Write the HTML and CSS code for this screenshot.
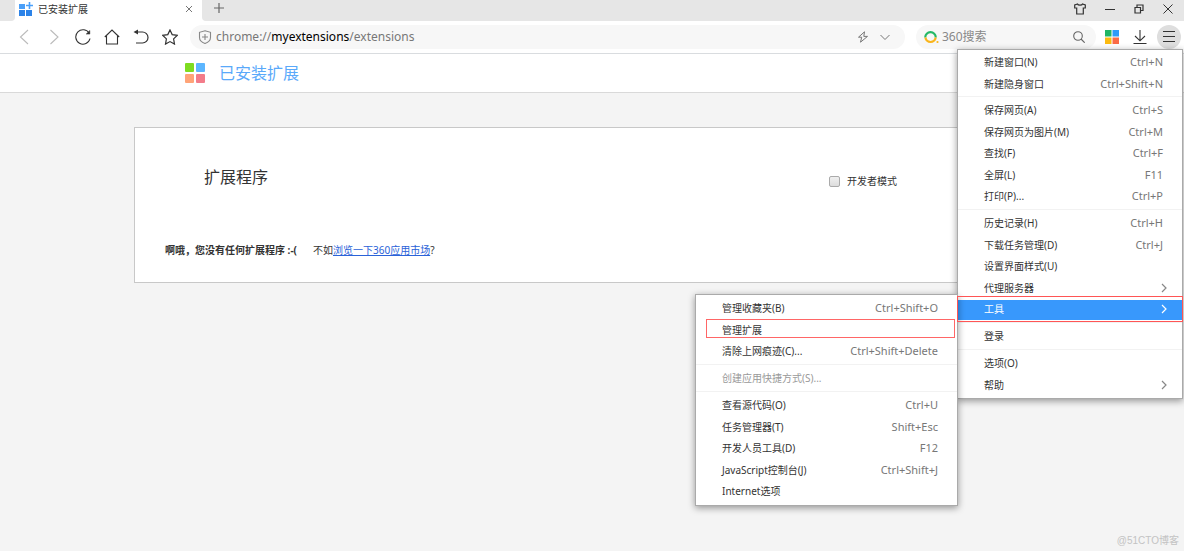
FILE: index.html
```html
<!DOCTYPE html>
<html lang="zh-CN">
<head>
<meta charset="utf-8">
<title>已安装扩展</title>
<link rel="stylesheet" href="styles.css">
</head>
<body>
<div class="browser">
  <div class="tabstrip">
    <div class="strip-lead"></div>
    <div class="tab">
      <svg class="tab-icon" width="14" height="14" viewBox="0 0 14 14"><path fill="#4a9ff8" d="M0 2h6v5H0z"/><path fill="#2c83e8" d="M7 8h6v6H7zM0 8h6v6H0z"/><path stroke="#4aa0fa" stroke-width="1.600" d="M10.500 0v7M7 3.500h7"/></svg>
      <span class="tab-title">已安装扩展</span>
      <button class="icon-button tab-close" aria-label="关闭标签页"><svg width="8" height="8" viewBox="0 0 8 8" fill="none" stroke="#777"><path d="M1 1l6 6M7 1L1 7"/></svg></button>
    </div>
    <div class="strip-rest">
      <button class="icon-button new-tab" aria-label="新标签页"><svg width="10" height="10" viewBox="0 0 10 10" fill="none" stroke="#666" stroke-width="1.200"><path d="M5 0v10M0 5h10"/></svg></button>
      <div class="window-controls">
        <button class="icon-button" aria-label="皮肤"><svg width="12" height="12" viewBox="0 0 12 12" fill="none" stroke="#333" stroke-width="1.200"><path d="M3.500 1L.7 2v3h2v6h6.600V5h2V2L8.500 1C8 2.600 4 2.600 3.500 1z"/></svg></button>
        <button class="icon-button" aria-label="最小化"><svg width="10" height="10" viewBox="0 0 10 10" stroke="#333"><path d="M0 5.500h10"/></svg></button>
        <button class="icon-button" aria-label="还原"><svg width="10" height="10" viewBox="0 0 10 10" fill="none" stroke="#333" stroke-width="1.200"><path d="M1 3.500h5.500V9H1zM3 3.500V1h6v5.500H6.500"/></svg></button>
        <button class="icon-button" aria-label="关闭"><svg width="10" height="10" viewBox="0 0 10 10" fill="none" stroke="#333"><path d="M.5.5l9 9M9.500.5l-9 9"/></svg></button>
      </div>
    </div>
  </div>

  <div class="toolbar">
    <div class="nav">
      <button class="icon-button" aria-label="后退"><svg width="16" height="16" viewBox="0 0 16 16" fill="none" stroke="#bbb" stroke-width="1.100"><path d="M11 1L3.500 8l7.500 7"/></svg></button>
      <button class="icon-button" aria-label="前进"><svg width="16" height="16" viewBox="0 0 16 16" fill="none" stroke="#bbb" stroke-width="1.100"><path d="M4.500 1L12 8l-7.500 7"/></svg></button>
      <button class="icon-button" aria-label="刷新"><svg width="16" height="16" viewBox="0 0 16 16" fill="none" stroke="#333" stroke-width="1.100"><path d="M14.300 4.500A7.200 7.200 0 1 0 15 9.500"/><path fill="#333" d="M14.800 1.500v3.600h-3.600z" stroke-width=".5"/></svg></button>
      <button class="icon-button" aria-label="主页"><svg width="16" height="16" viewBox="0 0 16 16" fill="none" stroke="#333" stroke-width="1.100"><path d="M.8 8L8 1l7.200 7M2.500 7v8h11V7"/></svg></button>
      <button class="icon-button" aria-label="恢复"><svg width="16" height="16" viewBox="0 0 16 16" fill="none" stroke="#333" stroke-width="1.200"><path d="M3 3h6.500a5.300 5.300 0 0 1 0 11H3"/><path fill="#333" stroke="none" d="M.5 3L5 .5v5z"/></svg></button>
      <button class="icon-button" aria-label="收藏"><svg width="16" height="16" viewBox="0 0 16 16" fill="none" stroke="#333" stroke-width="1.200"><path d="M8 .9l2.200 4.700 5.200.7-3.800 3.600.9 5.200L8 12.600l-4.500 2.500.9-5.200L.6 6.300l5.200-.7z"/></svg></button>
    </div>
    <div class="address">
      <svg width="14" height="14" viewBox="0 0 14 14" fill="none" stroke="#888" stroke-width="1.100"><path d="M7 .7l5.500 1.600v5.200c0 3-2.500 4.900-5.500 6-3-1.100-5.500-3-5.500-6V2.300zM7 4v6M4 7h6"/></svg>
      <span class="url">chrome://<b>myextensions</b>/extensions</span>
      <button class="icon-button" aria-label="极速模式"><svg width="12" height="12" viewBox="0 0 12 12" fill="none" stroke="#777"><path d="M7.500.8L1.500 6.200h3.200L3.500 11.200l7-5.800H6.800z"/></svg></button>
      <button class="icon-button" aria-label="展开地址栏"><svg width="10" height="10" viewBox="0 0 10 10" fill="none" stroke="#777"><path d="M.5 3L5 7.500 9.500 3"/></svg></button>
    </div>
    <div class="search">
      <svg width="15" height="14" viewBox="0 0 15 14" fill="none" stroke-width="2.200"><path stroke="#24b866" d="M1.200 7.500a5.300 5.300 0 1 1 10.600 0"/><path stroke="#f9b51c" d="M1.400 7.500a5.200 5.200 0 0 0 10.300 0"/><circle cx="13.500" cy="12" r="1.100" fill="#f9b51c"/></svg>
      <input class="search-input" type="text" placeholder="360搜索" aria-label="360搜索">
      <button class="icon-button" aria-label="搜索"><svg width="12" height="12" viewBox="0 0 12 12" fill="none" stroke="#666" stroke-width="1.100"><circle cx="5" cy="5" r="4.300"/><path d="M8 8l3.700 3.700"/></svg></button>
    </div>
    <div class="actions">
      <button class="icon-button" aria-label="应用"><svg width="14" height="14" viewBox="0 0 14 14"><path fill="#20b564" d="M0 0h6.500v6.500H0z"/><path fill="#2f9bf7" d="M7.500 0H14v6.500H7.500z"/><path fill="#fcbb10" d="M0 7.500h6.500V14H0z"/><path fill="#fb6b46" d="M7.500 7.500H14V14H7.500z"/></svg></button>
      <button class="icon-button" aria-label="下载"><svg width="14" height="14" viewBox="0 0 14 14" fill="none" stroke="#333" stroke-width="1.100"><path d="M7 0v10.500M2 6l5 4.800L12 6M.5 13.500h13"/></svg></button>
      <button class="icon-button menu-button" aria-label="菜单"><svg width="12" height="12" viewBox="0 0 12 12" stroke="#333"><path d="M0 .5h12M0 5.500h12M0 10.500h12"/></svg></button>
    </div>
  </div>

  <header class="page-header">
    <svg width="20" height="20" viewBox="0 0 20 20"><rect width="9" height="9" rx="1" fill="#7edc20"/><rect x="11" width="9" height="9" rx="1" fill="#5cb6ff"/><rect y="11" width="9" height="9" rx="1" fill="#ffa478"/><rect x="11" y="11" width="9" height="9" rx="1" fill="#f37c8a"/></svg>
    <h1 class="page-title">已安装扩展</h1>
  </header>

  <main class="page">
    <section class="card">
      <div class="card-head">
        <h2 class="card-title">扩展程序</h2>
        <label class="dev-mode"><input class="dev-check" type="checkbox">开发者模式</label>
      </div>
      <p class="empty"><strong>啊哦，您没有任何扩展程序 :-(</strong><span>不如<a href="#">浏览一下360应用市场</a>?</span></p>
    </section>
  </main>
  <footer class="credit">@51CTO博客</footer>

  <nav class="menu main-menu">
    <div class="group">
      <button class="item">新建窗口(N)<kbd>Ctrl+N</kbd></button>
      <button class="item">新建隐身窗口<kbd>Ctrl+Shift+N</kbd></button>
    </div>
    <div class="group">
      <button class="item">保存网页(A)<kbd>Ctrl+S</kbd></button>
      <button class="item">保存网页为图片(M)<kbd>Ctrl+M</kbd></button>
      <button class="item">查找(F)<kbd>Ctrl+F</kbd></button>
      <button class="item">全屏(L)<kbd>F11</kbd></button>
      <button class="item">打印(P)...<kbd>Ctrl+P</kbd></button>
    </div>
    <div class="group">
      <button class="item">历史记录(H)<kbd>Ctrl+H</kbd></button>
      <button class="item">下载任务管理(D)<kbd>Ctrl+J</kbd></button>
      <button class="item">设置界面样式(U)</button>
      <button class="item">代理服务器<svg class="chevron" width="6" height="10" viewBox="0 0 6 10"><path d="M1 1l4 4-4 4"/></svg></button>
      <div class="submenu-anchor">
        <button class="item selected">工具<svg class="chevron" width="6" height="10" viewBox="0 0 6 10"><path d="M1 1l4 4-4 4"/></svg></button>
        <div class="menu submenu">
          <div class="group">
            <button class="item">管理收藏夹(B)<kbd>Ctrl+Shift+O</kbd></button>
            <button class="item marked">管理扩展</button>
            <button class="item">清除上网痕迹(C)...<kbd>Ctrl+Shift+Delete</kbd></button>
          </div>
          <div class="group">
            <button class="item" disabled>创建应用快捷方式(S)...</button>
          </div>
          <div class="group">
            <button class="item">查看源代码(O)<kbd>Ctrl+U</kbd></button>
            <button class="item">任务管理器(T)<kbd>Shift+Esc</kbd></button>
            <button class="item">开发人员工具(D)<kbd>F12</kbd></button>
            <button class="item">JavaScript控制台(J)<kbd>Ctrl+Shift+J</kbd></button>
            <button class="item">Internet选项</button>
          </div>
        </div>
      </div>
    </div>
    <div class="group">
      <button class="item">登录</button>
    </div>
    <div class="group">
      <button class="item">选项(O)</button>
      <button class="item">帮助<svg class="chevron" width="6" height="10" viewBox="0 0 6 10"><path d="M1 1l4 4-4 4"/></svg></button>
    </div>
  </nav>
</div>
</body>
</html>
```

FILE: styles.css
```css
* { box-sizing: border-box; }

body {
  margin: 0;
  background: #f4f4f4;
  color: #333;
  font: 10px/20px "Noto Sans", "Noto Sans CJK SC", sans-serif;
}

button, input { font: inherit; color: inherit; }
svg { display: block; flex: none; }

.browser {
  position: relative;
  display: flex;
  flex-direction: column;
  min-height: 100vh;
  overflow: hidden;
}

.icon-button {
  display: flex;
  align-items: center;
  justify-content: center;
  padding: 0;
  border: 0;
  background: none;
}

/* Tab strip */
.tabstrip {
  display: flex;
  height: 21px;
  background: #fff;
}
.strip-lead {
  width: 15px;
  border-bottom-right-radius: 4px;
  background: #e6e6e6;
}
.strip-rest {
  display: flex;
  flex: 1;
  border-bottom-left-radius: 4px;
  background: #e6e6e6;
}
.tab {
  display: flex;
  align-items: center;
  width: 187px;
  padding: 0 9px 4px 4px;
}
.tab-title { flex: 1; margin-left: 5px; line-height: 16px; }
.new-tab { width: 34px; padding-bottom: 5px; }
.window-controls {
  display: flex;
  gap: 19px;
  margin-left: auto;
  padding: 0 11px 3px 0;
}

/* Toolbar */
.toolbar {
  display: flex;
  align-items: center;
  height: 33px;
  padding: 0 3px 1px 17px;
  border-bottom: 1px solid #d9dcdf;
  background: #fff;
}
.nav { display: flex; gap: 13px; margin-right: 12px; }
.address {
  display: flex;
  flex: 1;
  align-items: center;
  gap: 11px;
  height: 24px;
  padding: 0 15px 0 8px;
  border-radius: 12px;
  background: #f7f7f7;
}
.url { flex: 1; margin-left: -7px; color: #777; font-size: 12px; }
.url b { color: #000; font-weight: 400; }
.search {
  display: flex;
  align-items: center;
  width: 180px;
  height: 24px;
  margin-left: 11px;
  padding: 0 11px 0 8px;
  border-radius: 12px;
  background: #f7f7f7;
}
.search-input {
  flex: 1;
  min-width: 0;
  padding: 0 3px;
  border: 0;
  background: none;
  font-size: 12px;
}
.search-input::placeholder { color: #888; }
.actions { display: flex; align-items: center; gap: 14px; margin-left: 9px; }
.menu-button {
  width: 24px;
  height: 24px;
  margin-left: -4px;
  border-radius: 50%;
  background: #dedede;
}

/* Page */
.page-header {
  display: flex;
  align-items: center;
  gap: 14px;
  height: 39px;
  padding-left: 185px;
  border-bottom: 1px solid #d9d9d9;
  background: #fff;
}
.page-title { margin: 0; color: #5aa9fa; font-size: 16px; font-weight: 400; }
.page { padding: 34px 134px; }
.card {
  padding: 39px 30px 22px;
  border: 1px solid #c8c8c8;
  background: #fff;
}
.card-head {
  display: flex;
  justify-content: space-between;
  padding: 0 122px 0 39px;
}
.card-title { margin: 0; font-size: 16px; font-weight: 400; line-height: 20px; }
.dev-mode { display: flex; align-items: center; gap: 7px; padding-top: 4px; }
.dev-check {
  width: 11px;
  height: 11px;
  margin: 0;
  border: 1px solid #aaa;
  border-radius: 2px;
  appearance: none;
  background: linear-gradient(#f0f0f0, #ddd);
}
.empty { display: flex; gap: 16px; margin: 49px 0 0; }
.empty a { color: #2a62d8; }
.credit {
  margin-top: auto;
  padding-right: 5px;
  color: #c3c3c3;
  font-family: "Liberation Sans", "Noto Sans CJK SC", sans-serif;
  text-align: right;
}

/* Menus */
.menu {
  position: absolute;
  border: 1px solid #aaa;
  background: #fff;
  box-shadow: 0 2px 7px rgba(0, 0, 0, .4);
}
.main-menu { top: 49px; right: 1px; width: 226px; padding: 1px 0 3px; }
.submenu { top: -4px; right: 100%; width: 263px; padding: 2px 0 3px; }
.group { display: grid; grid-auto-rows: 22px 21px; }
.group + .group { margin-top: 2px; padding-top: 2px; border-top: 1px solid #f2f2f2; }
.item {
  display: flex;
  align-items: center;
  justify-content: space-between;
  width: 100%;
  height: 100%;
  padding: 0 19px 0 26px;
  border: 0;
  background: none;
  text-align: left;
}
.item:disabled { color: #999; }
.item kbd { color: #777; font: 11px/20px "Noto Sans", sans-serif; }
.chevron { margin-right: -4px; fill: none; stroke: #888; stroke-width: 1.2; }
.selected { background: #3898fc; box-shadow: inset 0 2px #fff; color: #fff; }
.selected .chevron { stroke: #fff; }
.submenu-anchor { position: relative; color: #333; }
.submenu-anchor::before {
  position: absolute;
  inset: -2px -1px;
  z-index: 1;
  border: 1px solid #f55;
  content: "";
  pointer-events: none;
}
.marked { position: relative; }
.marked::before {
  position: absolute;
  inset: 0 2px 2px 10px;
  border: 1px solid #f66;
  content: "";
}
```
